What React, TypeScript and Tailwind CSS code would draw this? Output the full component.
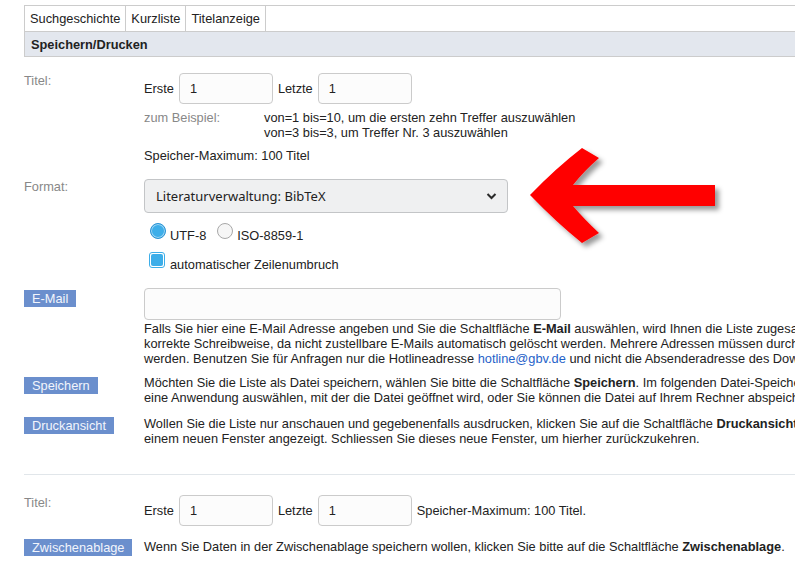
import React from "react";

function Btn({ children }: { children: React.ReactNode }) {
  return (
    <span className="inline-block h-[17px] px-[8px] bg-[#6b8fcd] text-[#f2f5fc] leading-[17px] whitespace-nowrap">
      {children}
    </span>
  );
}

function TextInput({ w, h, value }: { w: string; h: string; value?: string }) {
  return (
    <div
      className={`${w} ${h} shrink-0 border border-[#cbcbcb] rounded-[4px] bg-[#fcfcfc] flex items-center pl-[10px] text-[#222]`}
    >
      {value}
    </div>
  );
}

function Arrow() {
  return (
    <svg
      className="absolute left-[520px] top-[140px]"
      width="215"
      height="135"
      viewBox="0 0 215 135"
    >
      <defs>
        <filter id="sh" x="-20%" y="-20%" width="140%" height="150%">
          <feDropShadow dx="4" dy="4" stdDeviation="2.5" floodColor="#000" floodOpacity="0.4" />
        </filter>
      </defs>
      <path
        d="M10 55 Q36 28 62 8 L79 18 Q64 31 53 45 L195 45 L195 66 L53 66 Q64 79 79 93 L62 103 Q36 82 10 55 Z"
        fill="#ff0000"
        filter="url(#sh)"
      />
    </svg>
  );
}

export default function App() {
  return (
    <div className="relative w-[795px] h-[577px] overflow-hidden bg-white font-['Liberation_Sans',Arial,sans-serif] text-[12.8px] text-[#222] leading-[15px]">
      <div className="pl-[24px] pt-[5px]">
        <div className="w-[900px]">
          {/* Tabs */}
          <div className="flex h-[26px] border-t border-l border-[#cccccc]">
            <div className="px-[5px] border-r border-[#cccccc] flex items-center">Suchgeschichte</div>
            <div className="px-[5px] border-r border-[#cccccc] flex items-center">Kurzliste</div>
            <div className="px-[5px] border-r border-[#cccccc] flex items-center">Titelanzeige</div>
          </div>
          <div className="h-[26px] bg-[#e3e7ee] border-t border-b border-l border-[#cccccc] flex items-center pl-[6px] font-bold">
            Speichern/Drucken
          </div>

          {/* Titel row */}
          <div className="flex mt-[16px]">
            <div className="w-[120px] shrink-0 text-[#888]">Titel:</div>
            <div className="flex flex-col">
              <div className="flex items-center">
                <span className="mr-[5px]">Erste</span>
                <TextInput w="w-[94px]" h="h-[31px]" value="1" />
                <span className="ml-[5px] mr-[5px]">Letzte</span>
                <TextInput w="w-[94px]" h="h-[31px]" value="1" />
              </div>
              <div className="flex mt-[6px]">
                <div className="w-[120px] shrink-0 text-[#888]">zum Beispiel:</div>
                <div>
                  <div>von=1 bis=10, um die ersten zehn Treffer auszuwählen</div>
                  <div>von=3 bis=3, um Treffer Nr. 3 auszuwählen</div>
                </div>
              </div>
              <div className="mt-[8px]">Speicher-Maximum: 100 Titel</div>
            </div>
          </div>

          {/* Format row */}
          <div className="flex mt-[16px]">
            <div className="w-[120px] shrink-0 text-[#888]">Format:</div>
            <div className="flex flex-col">
              <div className="w-[364px] h-[34px] border border-[#c3c5c7] rounded-[4px] bg-[#eff0f1] flex items-center justify-between pl-[11px] pr-[10px] font-['Noto_Sans',sans-serif] text-[13px] text-[#222]">
                <span>Literaturverwaltung: BibTeX</span>
                <svg width="11" height="8" viewBox="0 0 11 8">
                  <polyline points="1.5,2 5.5,6 9.5,2" fill="none" stroke="#2a2a2a" strokeWidth="2" />
                </svg>
              </div>
              <div className="flex items-start mt-[10px] ml-[6px]">
                <span className="w-[16px] h-[16px] rounded-full border border-[#2b93d4] bg-[#3daee9] shadow-[inset_0_0_0_1px_#9fd6f4]" />
                <span className="ml-[4px] mt-[5px]">UTF-8</span>
                <span className="ml-[11px] w-[16px] h-[16px] rounded-full border border-[#a8a8a8] bg-[#f6f6f6]" />
                <span className="ml-[4px] mt-[5px]">ISO-8859-1</span>
              </div>
              <div className="flex items-start mt-[9px] ml-[5px]">
                <span className="w-[16px] h-[16px] rounded-[3px] border border-[#3daee9] bg-white p-[1px]">
                  <span className="block w-full h-full rounded-[2px] bg-[#3daee9]" />
                </span>
                <span className="ml-[5px] mt-[5px]">automatischer Zeilenumbruch</span>
              </div>
            </div>
          </div>

          {/* E-Mail row */}
          <div className="flex mt-[16px]">
            <div className="w-[120px] shrink-0 pt-[2px]">
              <Btn>E-Mail</Btn>
            </div>
            <div className="flex flex-col">
              <TextInput w="w-[417px]" h="h-[32px]" />
              <div className="mt-[1px] whitespace-nowrap">
                <div>
                  Falls Sie hier eine E-Mail Adresse angeben und Sie die Schaltfläche <b>E-Mail</b> auswählen, wird Ihnen die Liste zugesandt. Bitte achten Sie auf die
                </div>
                <div>
                  korrekte Schreibweise, da nicht zustellbare E-Mails automatisch gelöscht werden. Mehrere Adressen müssen durch Komma getrennt
                </div>
                <div>
                  werden. Benutzen Sie für Anfragen nur die Hotlineadresse{" "}
                  <span className="text-[#1f62c9]">hotline@gbv.de</span> und nicht die Absenderadresse des Downloads.
                </div>
              </div>
            </div>
          </div>

          {/* Speichern row */}
          <div className="flex mt-[9px]">
            <div className="w-[120px] shrink-0 pt-[2px]">
              <Btn>Speichern</Btn>
            </div>
            <div className="whitespace-nowrap">
              <div>
                Möchten Sie die Liste als Datei speichern, wählen Sie bitte die Schaltfläche <b>Speichern</b>. Im folgenden Datei-Speichern-Dialog können Sie
              </div>
              <div>
                eine Anwendung auswählen, mit der die Datei geöffnet wird, oder Sie können die Datei auf Ihrem Rechner abspeichern.
              </div>
            </div>
          </div>

          {/* Druckansicht row */}
          <div className="flex mt-[11px]">
            <div className="w-[120px] shrink-0 pt-[1px]">
              <Btn>Druckansicht</Btn>
            </div>
            <div className="whitespace-nowrap">
              <div>
                Wollen Sie die Liste nur anschauen und gegebenenfalls ausdrucken, klicken Sie auf die Schaltfläche <b>Druckansicht</b>. Die Liste wird in
              </div>
              <div>einem neuen Fenster angezeigt. Schliessen Sie dieses neue Fenster, um hierher zurückzukehren.</div>
            </div>
          </div>

          <div className="mt-[28px] h-px bg-[#e1e6ea]" />

          {/* Titel row 2 */}
          <div className="flex mt-[20px]">
            <div className="w-[120px] shrink-0 text-[#888]">Titel:</div>
            <div className="flex items-center">
              <span className="mr-[5px]">Erste</span>
              <TextInput w="w-[94px]" h="h-[31px]" value="1" />
              <span className="ml-[5px] mr-[5px]">Letzte</span>
              <TextInput w="w-[94px]" h="h-[31px]" value="1" />
              <span className="ml-[5px]">Speicher-Maximum: 100 Titel.</span>
            </div>
          </div>

          {/* Zwischenablage row */}
          <div className="flex mt-[13px]">
            <div className="w-[120px] shrink-0">
              <Btn>Zwischenablage</Btn>
            </div>
            <div className="whitespace-nowrap">
              Wenn Sie Daten in der Zwischenablage speichern wollen, klicken Sie bitte auf die Schaltfläche <b>Zwischenablage</b>.
            </div>
          </div>
        </div>
      </div>
      <Arrow />
    </div>
  );
}
